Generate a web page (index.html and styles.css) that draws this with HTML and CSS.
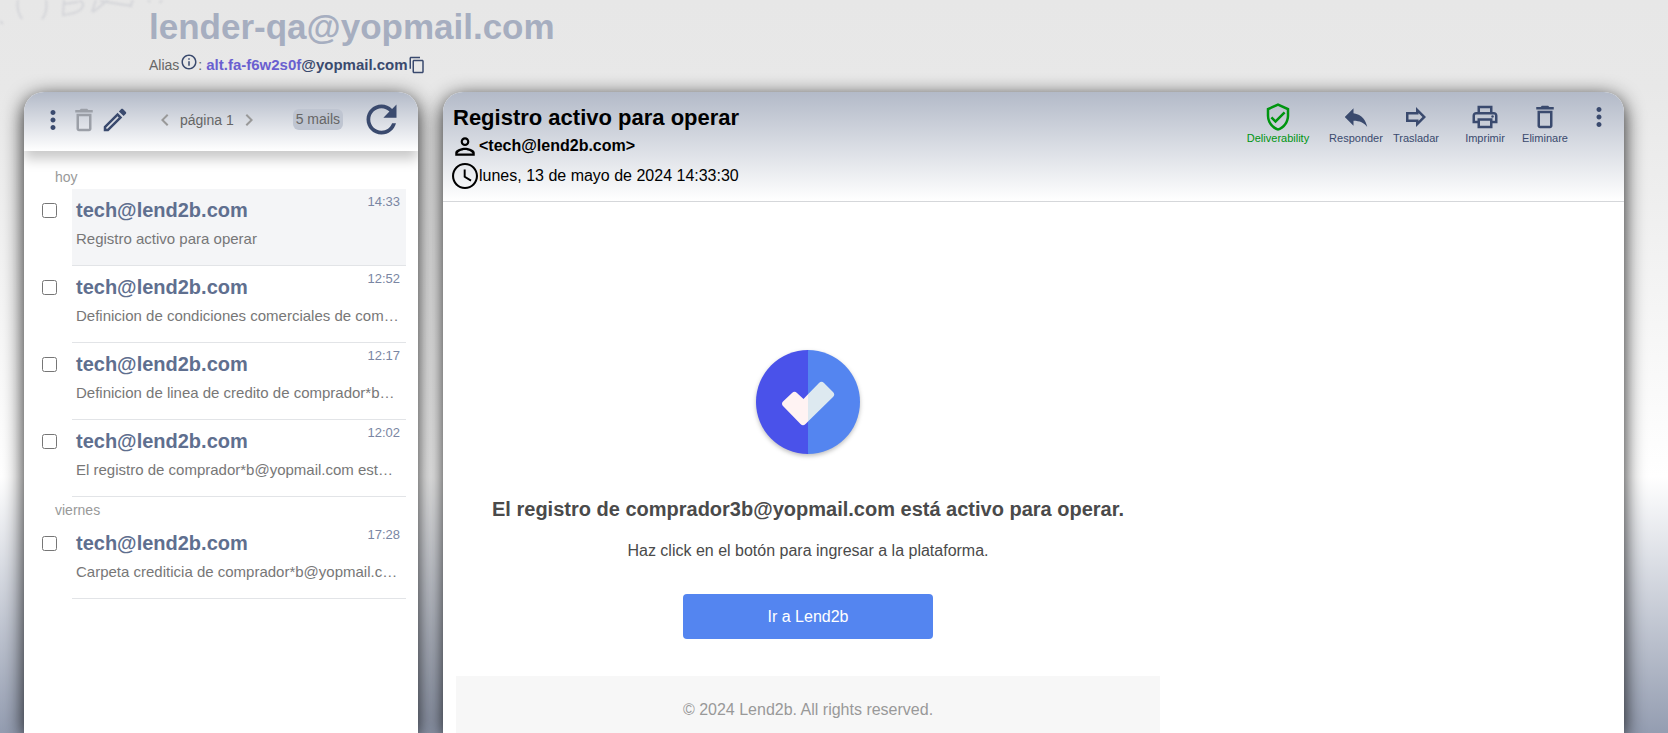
FILE: index.html
```
<!DOCTYPE html>
<html lang="es">

<head>
  <meta charset="UTF-8">
  <meta name="viewport" content="width=device-width, initial-scale=1.0">
  <title>Inbox</title>
  <link rel="stylesheet" href="styles.css">
</head>

<body>
  <svg class="swirl" viewBox="0 0 180 30" aria-hidden="true">
    <path d="M0 21l3 3M18 0q-2 10 4 19M46 0q2 12-4 19M64 0l-1 15q18-2 20-9 1-4-4-5M64 4l14-2M92 12l4-12M93 12L108 0M100 1l32 5M130 7l3-7M150 2l-2-2M160 3l2-3" />
  </svg>
  <header class="top">
    <h1 class="inboxName">lender-qa@yopmail.com</h1>
    <div class="alias">
      <span>Alias</span>
      <svg class="icon18 info" viewBox="0 0 24 24"><path d="M11 7h2v2h-2zm0 4h2v6h-2zm1-9C6.48 2 2 6.48 2 12s4.48 10 10 10 10-4.48 10-10S17.52 2 12 2zm0 18c-4.41 0-8-3.59-8-8s3.59-8 8-8 8 3.59 8 8-3.59 8-8 8z" /></svg>
      <span class="colon">:</span>
      <a class="aliasMail" href="#"><span class="aliasId">alt.fa-f6w2s0f</span>@yopmail.com</a>
      <button class="btn" type="button" aria-label="Copiar">
        <svg class="icon18" viewBox="0 0 24 24"><path d="M16 1H4c-1.1 0-2 .9-2 2v14h2V3h12V1zm3 4H8c-1.1 0-2 .9-2 2v14c0 1.1.9 2 2 2h11c1.1 0 2-.9 2-2V7c0-1.1-.9-2-2-2zm0 16H8V7h11v14z" /></svg>
      </button>
    </div>
  </header>

  <main class="panels">
    <section class="panel inbox">
      <div class="inboxBar">
        <div class="tools">
          <button class="btn" type="button" aria-label="Menú">
            <svg class="icon30" viewBox="0 0 24 24"><path d="M12 8c1.1 0 2-.9 2-2s-.9-2-2-2-2 .9-2 2 .9 2 2 2zm0 2c-1.1 0-2 .9-2 2s.9 2 2 2 2-.9 2-2-.9-2-2-2zm0 6c-1.1 0-2 .9-2 2s.9 2 2 2 2-.9 2-2-.9-2-2-2z" /></svg>
          </button>
          <button class="btn off" type="button" aria-label="Eliminar">
            <svg class="icon30" viewBox="0 0 24 24"><path d="M6 19c0 1.1.9 2 2 2h8c1.1 0 2-.9 2-2V7H6v12zM8 9h8v10H8V9zm7.5-5l-1-1h-5l-1 1H5v2h14V4h-3.5z" /></svg>
          </button>
          <button class="btn" type="button" aria-label="Escribir">
            <svg class="icon30" viewBox="0 0 24 24"><path d="M14.06 9.02l.92.92L5.92 19H5v-.92l9.06-9.06M17.66 3c-.25 0-.51.1-.7.29l-1.83 1.83 3.75 3.75 1.83-1.83c.39-.39.39-1.02 0-1.41l-2.34-2.34c-.2-.2-.45-.29-.71-.29zm-3.6 3.19L3 17.25V21h3.75L17.81 9.94l-3.75-3.75z" /></svg>
          </button>
        </div>
        <div class="pager">
          <button class="btn grey" type="button" aria-label="Anterior">
            <svg class="icon24" viewBox="0 0 24 24"><path d="M15.41 7.41L14 6l-6 6 6 6 1.41-1.41L10.83 12z" /></svg>
          </button>
          <span>página 1</span>
          <button class="btn grey" type="button" aria-label="Siguiente">
            <svg class="icon24" viewBox="0 0 24 24"><path d="M10 6L8.59 7.41 13.17 12l-4.58 4.59L10 18l6-6z" /></svg>
          </button>
        </div>
        <span class="count">5 mails</span>
        <button class="btn" type="button" aria-label="Actualizar">
          <svg class="icon45" viewBox="0 0 24 24"><path d="M17.65 6.35C16.2 4.9 14.21 4 12 4c-4.42 0-7.99 3.58-7.99 8s3.57 8 7.99 8c3.73 0 6.84-2.55 7.73-6h-2.08c-.82 2.33-3.04 4-5.65 4-3.31 0-6-2.69-6-6s2.69-6 6-6c1.66 0 3.14.69 4.22 1.78L13 11h7V4l-2.35 2.35z" /></svg>
        </button>
      </div>

      <div class="list">
        <div class="day">hoy</div>
        <div class="mail">
          <input type="checkbox" aria-label="Registro activo para operar">
          <a class="mailBody selected" href="#">
            <span class="time">14:33</span>
            <span class="from">tech@lend2b.com</span>
            <span class="subject">Registro activo para operar</span>
          </a>
        </div>
        <div class="mail">
          <input type="checkbox" aria-label="Definicion de condiciones comerciales">
          <a class="mailBody" href="#">
            <span class="time">12:52</span>
            <span class="from">tech@lend2b.com</span>
            <span class="subject">Definicion de condiciones comerciales de comprador*b@yopmail.com</span>
          </a>
        </div>
        <div class="mail">
          <input type="checkbox" aria-label="Definicion de linea de credito">
          <a class="mailBody" href="#">
            <span class="time">12:17</span>
            <span class="from">tech@lend2b.com</span>
            <span class="subject">Definicion de linea de credito de comprador*b@yopmail.com</span>
          </a>
        </div>
        <div class="mail">
          <input type="checkbox" aria-label="El registro de comprador">
          <a class="mailBody" href="#">
            <span class="time">12:02</span>
            <span class="from">tech@lend2b.com</span>
            <span class="subject">El registro de comprador*b@yopmail.com está activo</span>
          </a>
        </div>
        <div class="day">viernes</div>
        <div class="mail">
          <input type="checkbox" aria-label="Carpeta crediticia">
          <a class="mailBody" href="#">
            <span class="time">17:28</span>
            <span class="from">tech@lend2b.com</span>
            <span class="subject">Carpeta crediticia de comprador*b@yopmail.com</span>
          </a>
        </div>
      </div>
    </section>

    <section class="panel reader">
      <div class="readerBar">
        <div class="headers">
          <h2 class="title">Registro activo para operar</h2>
          <div class="line sender">
            <svg class="icon26" viewBox="0 0 24 24"><path d="M12 4C9.79 4 8 5.79 8 8s1.790 4 4 4 4-1.790 4-4-1.790-4-4-4zm0 6c-1.1 0-2-.9-2-2s.9-2 2-2 2 .9 2 2-.9 2-2 2zM12 13.5c-2.7 0-9 1.4-9 4.7V21h18v-2.8c0-3.300-6.300-4.7-9-4.7zM5 19c.2-1.200 3.600-3.400 7-3.400s6.800 2.200 7 3.400z" /></svg>
            <span>&lt;tech@lend2b.com&gt;</span>
          </div>
          <div class="line">
            <svg class="icon26" viewBox="2 2 20 20"><path d="M11.99 2C6.47 2 2 6.48 2 12s4.470 10 9.990 10C17.52 22 22 17.52 22 12S17.52 2 11.99 2zM12 20.400a8.400 8.400 0 1 1 0-16.800 8.400 8.400 0 0 1 0 16.800zM12.500 7H11v6l5.250 3.150.75-1.230-4.500-2.670z" /></svg>
            <span>lunes, 13 de mayo de 2024 14:33:30</span>
          </div>
        </div>
        <div class="actions">
          <button class="btn action green" type="button">
            <svg class="icon30" viewBox="0 0 24 24"><path d="M12 1L3 5v6c0 5.55 3.84 10.74 9 12 5.16-1.26 9-6.45 9-12V5l-9-4zm7 10c0 4.52-2.98 8.69-7 9.93-4.020-1.240-7-5.410-7-9.930V6.300l7-3.110 7 3.110V11zm-11.590.590L6 13l4 4 8-8-1.410-1.420L10 14.170z" /></svg>
            Deliverability
          </button>
          <div class="group">
            <button class="btn action" type="button">
              <svg class="icon30" viewBox="0 0 24 24"><path d="M10 9V5l-7 7 7 7v-4.100c5 0 8.500 1.600 11 5.100-1-5-4-10-11-11z" /></svg>
              Responder
            </button>
            <button class="btn action" type="button">
              <svg class="icon30" viewBox="0 0 24 24"><path d="M14 8.830L17.170 12 14 15.170V14H6v-4h8V8.830M12 4v4H4v8h8v4l8-8-8-8z" /></svg>
              Trasladar
            </button>
          </div>
          <div class="group">
            <button class="btn action" type="button">
              <svg class="icon30" viewBox="0 0 24 24"><path d="M19 8h-1V3H6v5H5c-1.660 0-3 1.340-3 3v6h4v4h12v-4h4v-6c0-1.660-1.340-3-3-3zM8 5h8v3H8V5zm8 12v2H8v-4h8v2zm2-2v-2H6v2H4v-4c0-.55.45-1 1-1h14c.55 0 1 .45 1 1v4h-2z" /><circle cx="18" cy="11.500" r="1" /></svg>
              Imprimir
            </button>
            <button class="btn action" type="button">
              <svg class="icon30" viewBox="0 0 24 24"><path d="M6 19c0 1.1.9 2 2 2h8c1.1 0 2-.9 2-2V7H6v12zM8 9h8v10H8V9zm7.5-5l-1-1h-5l-1 1H5v2h14V4h-3.5z" /></svg>
              Eliminare
            </button>
          </div>
          <button class="btn" type="button" aria-label="Más">
            <svg class="icon30" viewBox="0 0 24 24"><path d="M12 8c1.1 0 2-.9 2-2s-.9-2-2-2-2 .9-2 2 .9 2 2 2zm0 2c-1.1 0-2 .9-2 2s.9 2 2 2 2-.9 2-2-.9-2-2-2zm0 6c-1.1 0-2 .9-2 2s.9 2 2 2 2-.9 2-2-.9-2-2-2z" /></svg>
          </button>
        </div>
      </div>

      <article class="letter">
        <svg class="logo" viewBox="0 0 104 104" role="img" aria-label="Lend2b">
          <clipPath id="leftHalf"><path d="M0 0h52v104H0z" /></clipPath>
          <clipPath id="rightHalf"><path d="M52 0h52v104H52z" /></clipPath>
          <g clip-path="url(#leftHalf)">
            <circle cx="52" cy="52" r="52" fill="#4a52ea" />
            <path d="M36 43Q38.500 40.500 41 43L47.500 49 63 33Q65.500 30.500 68 33L77 42Q79.500 44.500 77 47L49.500 74Q47 76.500 44.500 74L27 56Q25 53.500 27 51.500Z" fill="#fff3f3" />
          </g>
          <g clip-path="url(#rightHalf)">
            <circle cx="52" cy="52" r="52" fill="#5485f0" />
            <path d="M36 43Q38.500 40.500 41 43L47.500 49 63 33Q65.500 30.500 68 33L77 42Q79.500 44.500 77 47L49.500 74Q47 76.500 44.500 74L27 56Q25 53.500 27 51.500Z" fill="#dde9f0" />
          </g>
        </svg>
        <h3 class="letterTitle">El registro de comprador3b@yopmail.com está activo para operar.</h3>
        <p class="letterText">Haz click en el botón para ingresar a la plataforma.</p>
        <a class="letterLink" href="#">Ir a Lend2b</a>
        <footer class="letterFooter">© 2024 Lend2b. All rights reserved.</footer>
      </article>
    </section>
  </main>
</body>

</html>
```
FILE: styles.css
```
* {
  box-sizing: border-box;
}
body {
  display: flex;
  flex-direction: column;
  margin: 0;
  height: 100vh;
  overflow: hidden;
  font-family: "Liberation Sans", Arial, sans-serif;
  color: #666;
  background: linear-gradient(#e7e7e7 0, #e8e8e8 12%, #fff 65%, #949db1 100%);
}
h1,
h2,
h3,
p {
  margin: 0;
}
a {
  color: inherit;
  text-decoration: none;
}
svg {
  display: block;
  flex: none;
  fill: currentColor;
}
.icon18 {
  width: 18px;
  height: 18px;
}
.icon24 {
  width: 24px;
  height: 24px;
}
.icon26 {
  width: 26px;
  height: 26px;
}
.icon30 {
  width: 30px;
  height: 30px;
}
.icon45 {
  width: 45px;
  height: 45px;
}
.btn {
  padding: 0;
  border: 0;
  background: none;
  font: inherit;
  color: #3a4a6e;
  cursor: pointer;
}
.btn.off {
  color: #9b9fa7;
}
.btn.grey {
  color: #999;
}

/* top */
.swirl {
  position: absolute;
  top: 0;
  left: 0;
  width: 180px;
  height: 30px;
  fill: none;
  stroke: #d4d5d9;
  stroke-width: 2;
  filter: blur(1px);
}
.top {
  padding: 7px 0 0 149px;
  height: 92px;
}
.inboxName {
  font-size: 35px;
  line-height: 40px;
  color: #a6aec0;
}
.alias {
  display: flex;
  align-items: center;
  margin-top: 6px;
  font-size: 14px;
  line-height: 20px;
}
.info {
  margin: 0 0 6px 1px;
  color: #3a4a6e;
}
.colon {
  margin-right: 4px;
}
.aliasMail {
  font-size: 15px;
  font-weight: bold;
  color: #3a4a6e;
}
.aliasId {
  color: #6a5fd0;
}

/* panels */
.panels {
  display: flex;
  flex: 1;
  gap: 25px;
  min-height: 0;
  padding: 0 44px 0 24px;
}
.panel {
  background: #fff;
  border-radius: 20px 20px 0 0;
  box-shadow: 0 5px 20px rgba(0, 0, 0, .9);
  overflow: hidden;
}
.inbox {
  flex: none;
  width: 394px;
}
.inboxBar {
  display: flex;
  align-items: center;
  padding: 0 14px 4px;
  height: 59px;
  font-size: 14px;
  background: linear-gradient(#b3bac8, #fff);
  box-shadow: 0 8px 12px rgba(0, 0, 0, .22);
}
.tools,
.pager {
  display: flex;
  align-items: center;
}
.tools {
  gap: 1px;
}
.pager {
  gap: 3px;
  margin: 0 auto 0 23px;
}
.count {
  margin-right: 16px;
  padding: 2px 3px;
  line-height: 17px;
  border-radius: 6px;
  background: #bfc5d1;
}
.list {
  padding: 15px 12px 0 16px;
}
.day {
  padding-left: 15px;
  font-size: 14px;
  line-height: 23px;
  color: #999;
}
.mail + .day {
  padding-top: 2px;
}
.mail {
  display: flex;
  align-items: flex-start;
  gap: 15px;
}
.mail input {
  flex: none;
  margin: 14px 0 0 2px;
  width: 15px;
  height: 15px;
}
.mailBody {
  flex: 1;
  min-width: 0;
  height: 77px;
  padding: 5px 6px 0 4px;
  border-bottom: 1px solid #e2e4e7;
}
.mailBody.selected {
  background: #f4f5f7;
}
.time {
  float: right;
  font-size: 13px;
  line-height: 15px;
  color: #7a86a3;
}
.from {
  display: block;
  padding-top: 4px;
  font-size: 20px;
  font-weight: bold;
  line-height: 25px;
  color: #5f6f8f;
}
.subject {
  display: block;
  margin-top: 5px;
  overflow: hidden;
  font-size: 15px;
  line-height: 21px;
  color: #777;
  text-overflow: ellipsis;
  white-space: nowrap;
}

/* reader */
.reader {
  flex: 1;
  min-width: 0;
}
.readerBar {
  display: flex;
  justify-content: space-between;
  height: 110px;
  border-bottom: 1px solid #d5d7da;
  background: linear-gradient(#b3bac8, #fff);
}
.headers {
  padding: 12px 0 0 9px;
  color: #000;
}
.title {
  padding-left: 1px;
  font-size: 22px;
  line-height: 27px;
}
.line {
  display: flex;
  align-items: center;
  gap: 1px;
  height: 30px;
  font-size: 16px;
}
.sender {
  font-weight: bold;
}
.actions {
  display: flex;
  align-items: flex-start;
  gap: 9px;
  padding: 10px 10px 0 0;
}
.group {
  display: flex;
}
.action {
  display: flex;
  flex-direction: column;
  align-items: center;
  width: 60px;
  font-size: 11px;
  line-height: 13px;
}
.action.green {
  width: 64px;
  margin-right: 7px;
  color: #009510;
}

/* letter */
.letter {
  display: flex;
  flex-direction: column;
  align-items: center;
  max-width: 704px;
  margin-left: 13px;
  padding-top: 148px;
  color: #4a4a4a;
}
.logo {
  width: 104px;
  height: 104px;
  filter: drop-shadow(0 2px 2px rgba(0, 0, 0, .25));
}
.letterTitle {
  margin-top: 43px;
  font-size: 20px;
  line-height: 24px;
}
.letterText {
  margin-top: 20px;
  font-size: 16px;
  line-height: 20px;
}
.letterLink {
  width: 250px;
  margin-top: 33px;
  font-size: 16px;
  line-height: 45px;
  text-align: center;
  color: #fff;
  border-radius: 4px;
  background: #5485f0;
}
.letterFooter {
  width: 100%;
  margin-top: 37px;
  padding: 24px 0;
  font-size: 16px;
  line-height: 20px;
  text-align: center;
  color: #999;
  background: #f7f7f7;
}
```
